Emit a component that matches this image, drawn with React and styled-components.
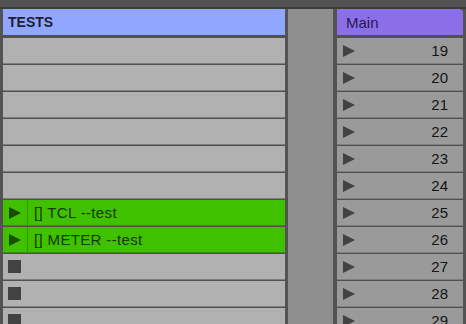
import React from "react";
import styled, { createGlobalStyle } from "styled-components";

const Global = createGlobalStyle`
  html, body { margin: 0; padding: 0; background: #535353; }
  body { width: 466px; height: 324px; overflow: hidden; font-family: "Liberation Sans", Arial, sans-serif; }
`;

const Page = styled.div`
  width: 466px;
  height: 324px;
  display: flex;
  flex-direction: column;
  background: #535353;
  overflow: hidden;
`;

const TopBar = styled.div`
  height: 7px;
  flex: none;
  background: #525252;
  border-bottom: 2px solid #3c3c3c;
`;

const Columns = styled.div`
  flex: 1;
  display: flex;
  padding: 0 3px;
  gap: 3px;
  min-height: 0;
`;

const Track = styled.div`
  width: ${(p) => p.$w}px;
  flex: none;
  display: flex;
  flex-direction: column;
  gap: 1px;
  background: #505050;
`;

const Spacer = styled.div`
  width: 45px;
  flex: none;
  background: #8f8f8f;
  margin-right: 1px;
`;

const Header = styled.div`
  height: 26px;
  flex: none;
  margin-bottom: 2px;
  background: ${(p) => p.$bg};
  color: ${(p) => p.$fg};
  display: flex;
  align-items: center;
  padding-left: ${(p) => p.$pad}px;
  font-size: ${(p) => p.$size}px;
  font-weight: ${(p) => p.$weight};
  border-top-right-radius: ${(p) => p.$radius}px;
`;

const Row = styled.div`
  height: 25px;
  flex: none;
  display: flex;
  align-items: center;
  background: ${(p) => (p.$green ? "#3fc100" : p.$bg)};
  border-bottom: 1px solid ${(p) => (p.$green ? "#2f9400" : "#7e7e7e")};
`;

const Slot = styled.div`
  width: 24px;
  height: 100%;
  flex: none;
  display: flex;
  align-items: center;
  justify-content: center;
  border-right: 1px solid ${(p) => (p.$green ? "#2f9a00" : "transparent")};
`;

const Play = styled.div`
  width: 0;
  height: 0;
  border-top: 6px solid transparent;
  border-bottom: 6px solid transparent;
  border-left: 12px solid ${(p) => p.$color};
`;

const Stop = styled.div`
  width: 13px;
  height: 13px;
  background: #424242;
  margin-left: -1px;
`;

const ClipName = styled.span`
  padding-left: 6px;
  font-size: 15px;
  letter-spacing: 0.35px;
  color: #173800;
  white-space: nowrap;
`;

const SceneRow = styled(Row)`
  padding: 0 15px 0 6px;
  justify-content: space-between;
`;

const SceneNum = styled.span`
  font-size: 15px;
  color: #141414;
`;

const leftRows = [
  null, null, null, null, null, null,
  { name: "[] TCL --test" },
  { name: "[] METER --test" },
  "stop", "stop", "stop",
];

const scenes = [19, 20, 21, 22, 23, 24, 25, 26, 27, 28, 29];

export default function App() {
  return (
    <Page>
      <Global />
      <TopBar />
      <Columns>
        <Track $w={282}>
          <Header $bg="#91a7ff" $fg="#1b2036" $pad={5} $size={14} $weight={700} $radius={0}>
            TESTS
          </Header>
          {leftRows.map((r, i) => {
            if (r && typeof r === "object") {
              return (
                <Row key={i} $green>
                  <Slot $green>
                    <Play $color="#1b4d00" />
                  </Slot>
                  <ClipName>{r.name}</ClipName>
                </Row>
              );
            }
            return (
              <Row key={i} $bg="#b1b1b1">
                {r === "stop" && (
                  <Slot>
                    <Stop />
                  </Slot>
                )}
              </Row>
            );
          })}
        </Track>
        <Spacer />
        <Track $w={126}>
          <Header $bg="#8b6fe8" $fg="#261a50" $pad={9} $size={15} $weight={400} $radius={4}>
            Main
          </Header>
          {scenes.map((n) => (
            <SceneRow key={n} $bg="#9a9a9a">
              <Play $color="#424242" />
              <SceneNum>{n}</SceneNum>
            </SceneRow>
          ))}
        </Track>
      </Columns>
    </Page>
  );
}
